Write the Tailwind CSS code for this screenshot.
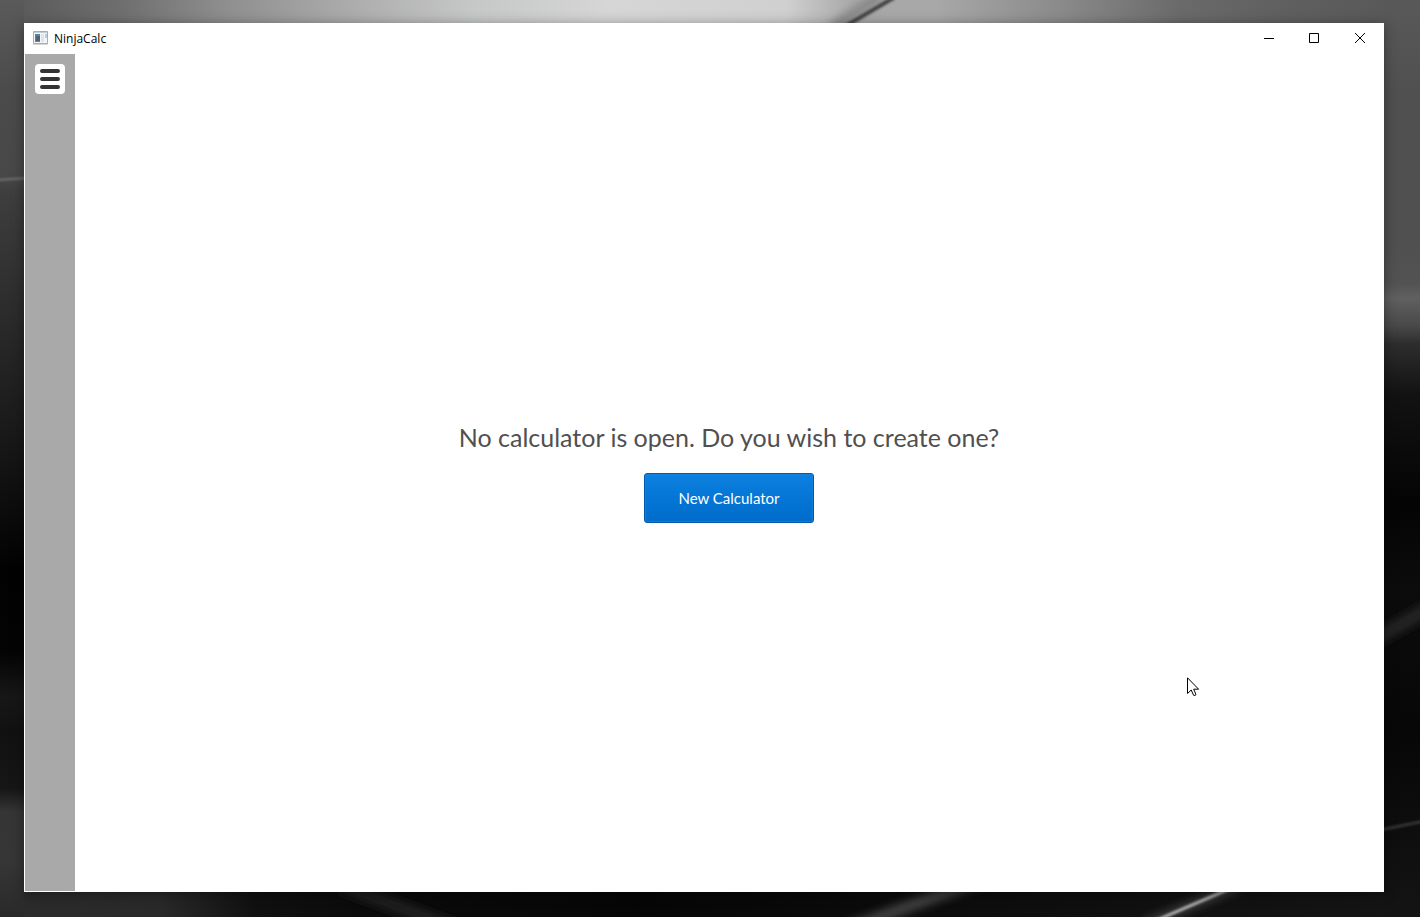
<!DOCTYPE html>
<html lang="en">
<head>
<meta charset="utf-8">
<meta name="viewport" content="width=device-width, initial-scale=1">
<title>NinjaCalc</title>
<script src="https://cdn.jsdelivr.net/npm/@tailwindcss/browser@4"></script>
</head>
<body class="relative isolate flex min-h-screen flex-col bg-black pt-[23px] pr-9 pb-[25px] pl-6 font-['Open_Sans',sans-serif]">
  <!-- Desktop wallpaper -->
  <svg class="absolute inset-0 -z-10 size-full" viewBox="0 0 1420 917" preserveAspectRatio="none" aria-hidden="true">
    <defs>
      <linearGradient id="top" x1="0" x2="1" y1="0" y2="0">
        <stop offset="0" stop-color="#5c5c5c"/><stop offset=".07" stop-color="#6e6e6e"/><stop offset=".15" stop-color="#8f8f8f"/>
        <stop offset=".25" stop-color="#afafaf"/><stop offset=".33" stop-color="#c6c7c7"/><stop offset=".43" stop-color="#d6d6d6"/>
        <stop offset=".56" stop-color="#d0d0d0"/><stop offset=".61" stop-color="#a8a8a8"/><stop offset=".67" stop-color="#a8a8a8"/>
        <stop offset=".76" stop-color="#8b8b8b"/><stop offset=".85" stop-color="#6a6a6a"/><stop offset=".93" stop-color="#5f5f5f"/><stop offset="1" stop-color="#595959"/>
      </linearGradient>
      <linearGradient id="left" x1="0" x2="0" y1="0" y2="1">
        <stop offset="0" stop-color="#5a5a5a"/><stop offset=".1" stop-color="#4b4b4b"/><stop offset=".19" stop-color="#484848"/>
        <stop offset=".21" stop-color="#3e3e3e"/><stop offset=".33" stop-color="#2d2d2d"/><stop offset=".48" stop-color="#181818"/>
        <stop offset=".62" stop-color="#020202"/><stop offset=".71" stop-color="#040404"/><stop offset=".76" stop-color="#171717"/>
        <stop offset=".8" stop-color="#111"/><stop offset=".86" stop-color="#161616"/><stop offset=".885" stop-color="#353535"/>
        <stop offset=".94" stop-color="#363636"/><stop offset="1" stop-color="#292929"/>
      </linearGradient>
      <linearGradient id="right" x1="0" x2="0" y1="0" y2="1">
        <stop offset="0" stop-color="#595959"/><stop offset=".1" stop-color="#505050"/><stop offset=".27" stop-color="#505050"/>
        <stop offset=".31" stop-color="#535353"/><stop offset=".325" stop-color="#606060"/><stop offset=".355" stop-color="#494949"/>
        <stop offset=".375" stop-color="#2d2d2d"/><stop offset=".43" stop-color="#121212"/><stop offset=".55" stop-color="#040404"/>
        <stop offset=".64" stop-color="#0c0c0c"/><stop offset=".8" stop-color="#070707"/><stop offset="1" stop-color="#141414"/>
      </linearGradient>
      <linearGradient id="bottom" x1="0" x2="1" y1="0" y2="0">
        <stop offset="0" stop-color="#2b2b2b"/><stop offset=".1" stop-color="#292929"/><stop offset=".17" stop-color="#101010"/>
        <stop offset=".25" stop-color="#0b0b0b"/><stop offset=".45" stop-color="#060606"/><stop offset=".7" stop-color="#0d0d0d"/><stop offset="1" stop-color="#141414"/>
      </linearGradient>
      <filter id="soft" filterUnits="userSpaceOnUse" x="-50" y="-50" width="1520" height="1017"><feGaussianBlur stdDeviation="5"/></filter>
      <filter id="fine" filterUnits="userSpaceOnUse" x="-50" y="-50" width="1520" height="1017"><feGaussianBlur stdDeviation="1"/></filter>
    </defs>
    <rect width="700" height="917" fill="url(#left)"/>
    <rect x="700" width="720" height="917" fill="url(#right)"/>
    <rect x="24" width="1360" height="40" fill="url(#top)"/>
    <rect x="24" y="870" width="1360" height="47" fill="url(#bottom)"/>
    <path d="M832 28L882-5" stroke="#808080" stroke-width="9" filter="url(#soft)"/>
    <path d="M842 28L895-3" stroke="#454545" stroke-width="4" filter="url(#fine)"/>
    <path d="M-4 180L28 178" stroke="#737373" stroke-width="2" filter="url(#fine)"/>
    <path d="M340 885L460 930" stroke="#242424" stroke-width="12" filter="url(#soft)"/>
    <path d="M845 930L980 880" stroke="#4a4a4a" stroke-width="10" filter="url(#soft)"/>
    <path d="M1144 925L1240 885" stroke="#484848" stroke-width="7" filter="url(#soft)"/>
    <path d="M1155 921L1236 886" stroke="#aaa" stroke-width="3" filter="url(#fine)"/>
    <path d="M1370 642L1430 608" stroke="#252525" stroke-width="13" filter="url(#soft)"/>
    <path d="M1375 831L1430 820" stroke="#333" stroke-width="3" filter="url(#fine)"/>
  </svg>

  <div class="flex grow flex-col border border-t-0 border-white bg-white shadow-[0_2px_12px_rgba(0,0,0,0.4)]">
    <header class="flex h-[31px] shrink-0 items-center justify-between">
      <div class="flex items-center gap-[5px] pl-2">
        <svg class="h-[15px] w-4" viewBox="0 0 16 15" aria-hidden="true">
          <path d="M.5 .5h14v12H.5z" fill="#f4f5f6" stroke="#a9adb0"/>
          <path d="M1 1h13v1H1z" fill="#c8cdd0"/>
          <path d="M2 3h5v8H2z" fill="#4f86b0"/>
          <path d="M3 5h4v5H3z" fill="#526176"/>
          <path d="M8 3h3v8H8z" fill="#dce4ee"/>
          <path d="M12 3h2v4h-2z" fill="#b8cfe1"/>
          <path d="M0 13h15v1H0z" fill="#d6d6d6"/>
        </svg>
        <h1 class="text-xs text-black">NinjaCalc</h1>
      </div>
      <div class="flex h-[30px] self-start">
        <button type="button" aria-label="Minimize" class="flex w-[45px] items-center justify-center"><svg class="size-[10px]" viewBox="0 0 10 10"><path d="M0 5h10v1H0z"/></svg></button>
        <button type="button" aria-label="Maximize" class="flex w-[46px] items-center justify-center"><svg class="size-[10px]" viewBox="0 0 10 10" fill="none" stroke="#000"><path d="M.5 .5h9v9h-9z"/></svg></button>
        <button type="button" aria-label="Close" class="flex w-[46px] items-center justify-center"><svg class="size-[10px]" viewBox="0 0 10 10" stroke="#000"><path d="M0 0L10 10M10 0L0 10"/></svg></button>
      </div>
    </header>

    <div class="flex grow">
      <aside class="w-[50px] shrink-0 bg-[#a9a9a9] p-[10px]">
        <button type="button" aria-label="Menu" class="flex size-[30px] items-center justify-center rounded-[4px] bg-white">
          <svg class="size-5" viewBox="0 0 20 20" stroke="#333" stroke-width="4" stroke-linecap="round"><path d="M2 2h16M2 10h16M2 18h16"/></svg>
        </button>
      </aside>
      <main class="flex grow flex-col items-center justify-center gap-5 pb-px text-center font-[Lato,sans-serif]">
        <p class="text-[25px] leading-8 text-[#505050]">No calculator is open. Do you wish to create one?</p>
        <button type="button" class="h-[50px] w-[170px] rounded-[3px] border border-[#0059aa] bg-linear-to-b from-[#0c80e0] to-[#006ccb] text-[15px] text-white inset-ring inset-ring-[#1c84dc]/60">New Calculator</button>
      </main>
    </div>
  </div>

  <!-- Mouse pointer -->
  <svg class="pointer-events-none absolute top-[677px] left-[1187px] h-[20px] w-[13px]" viewBox="0 0 13 20" fill="#fff" stroke="#000" aria-hidden="true">
    <path d="M.5 .8V16.5L4.2 13L6.6 18.3Q8 19 9 17.6L6.7 12.2H11.6Z"/>
  </svg>
</body>
</html>
